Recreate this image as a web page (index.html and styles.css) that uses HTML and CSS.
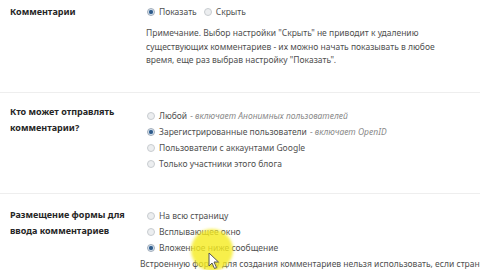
FILE: index.html
```html
<!DOCTYPE html>
<html lang="ru">
<head>
    <meta charset="UTF-8">
    <title>Настройки комментариев</title>
    <link rel="stylesheet" href="styles.css">
</head>
<body>
    <div class="settings">
        <div class="section first">
            <div class="label">Комментарии</div>
            <div class="options">
                <div class="inline">
                    <span class="opt"><span class="radio on"></span>Показать</span>
                    <span class="opt"><span class="radio"></span>Скрыть</span>
                </div>
                <p class="note">Примечание. Выбор настройки "Скрыть" не приводит к удалению<br>существующих комментариев - их можно начать показывать в любое<br>время, еще раз выбрав настройку "Показать".</p>
            </div>
        </div>

        <div class="section second">
            <div class="label">Кто может отправлять<br>комментарии?</div>
            <div class="options list">
                <div class="opt"><span class="radio"></span>Любой <i>- включает Анонимных пользователей</i></div>
                <div class="opt"><span class="radio on"></span>Зарегистрированные пользователи <i>- включает OpenID</i></div>
                <div class="opt"><span class="radio"></span>Пользователи с аккаунтами Google</div>
                <div class="opt"><span class="radio"></span>Только участники этого блога</div>
            </div>
        </div>

        <div class="section third">
            <div class="label">Размещение формы для<br>ввода комментариев</div>
            <div class="options list">
                <div class="opt"><span class="radio"></span>На всю страницу</div>
                <div class="opt"><span class="radio"></span>Всплывающее окно</div>
                <div class="opt"><span class="radio on"></span>Вложенное ниже сообщение</div>
                <p class="note wide">Встроенную форму для создания комментариев нельзя использовать, если страница</p>
            </div>
        </div>
    </div>

    <!-- cursor highlight from the screen recording -->
    <div class="highlight"></div>
    <svg class="cursor" width="12" height="18" viewBox="0 0 12 18">
        <path d="M1 1 L1 14 L4 11 L6.5 16.5 L8.5 15.5 L6 10 L10.5 10 Z" fill="#fff" stroke="#555" stroke-width="1"/>
    </svg>
</body>
</html>
```

FILE: styles.css
```css
body {
    margin: 0;
    background: #fff;
    color: #505050;
    font-family: "Noto Sans", sans-serif;
    font-size: 8.5px;
    overflow: hidden;
}
.settings {
    width: 480px;
}
.section {
    display: flex;
    border-bottom: 1px solid #eeeeee;
}
.label {
    width: 136px;
    padding-left: 10px;
    font-weight: bold;
    color: #262626;
    font-size: 9px;
    line-height: 16px;
    flex-shrink: 0;
}
.options {
    flex: 1;
    white-space: nowrap;
    overflow: hidden;
}
.first {
    padding-top: 4px;
    padding-bottom: 25px;
}
.second {
    padding-top: 11px;
    padding-bottom: 21px;
}
.second .options {
    margin-top: 4px;
}
.third {
    padding-top: 13px;
    border-bottom: none;
}
.third .options {
    margin-top: 1px;
    overflow: visible;
}
.inline {
    display: flex;
    gap: 7px;
    padding-left: 1px;
}
.opt {
    display: flex;
    align-items: center;
    line-height: 16px;
}
.list .opt {
    padding-left: 1px;
}
.opt i {
    color: #8a8a8a;
    margin-left: 3px;
}
.radio {
    width: 8px;
    height: 8px;
    border-radius: 50%;
    border: 1px solid #c8ccd0;
    background: #eceef0;
    margin-right: 4px;
    flex-shrink: 0;
    box-sizing: border-box;
}
.radio.on {
    border-color: #a0acba;
    background: radial-gradient(circle, #2b4f7a 0, #3a6a9a 1.8px, #d8e2ee 2.5px);
}
.note {
    margin: 6px 0 0;
    line-height: 13.5px;
}
.note.wide {
    margin: 1px 0 0 -6px;
}
.highlight {
    position: absolute;
    left: 191px;
    top: 229px;
    width: 42px;
    height: 42px;
    border-radius: 50%;
    background: rgba(245, 235, 30, 0.8);
    filter: blur(1.5px);
}
.cursor {
    position: absolute;
    left: 208px;
    top: 252px;
}
```
